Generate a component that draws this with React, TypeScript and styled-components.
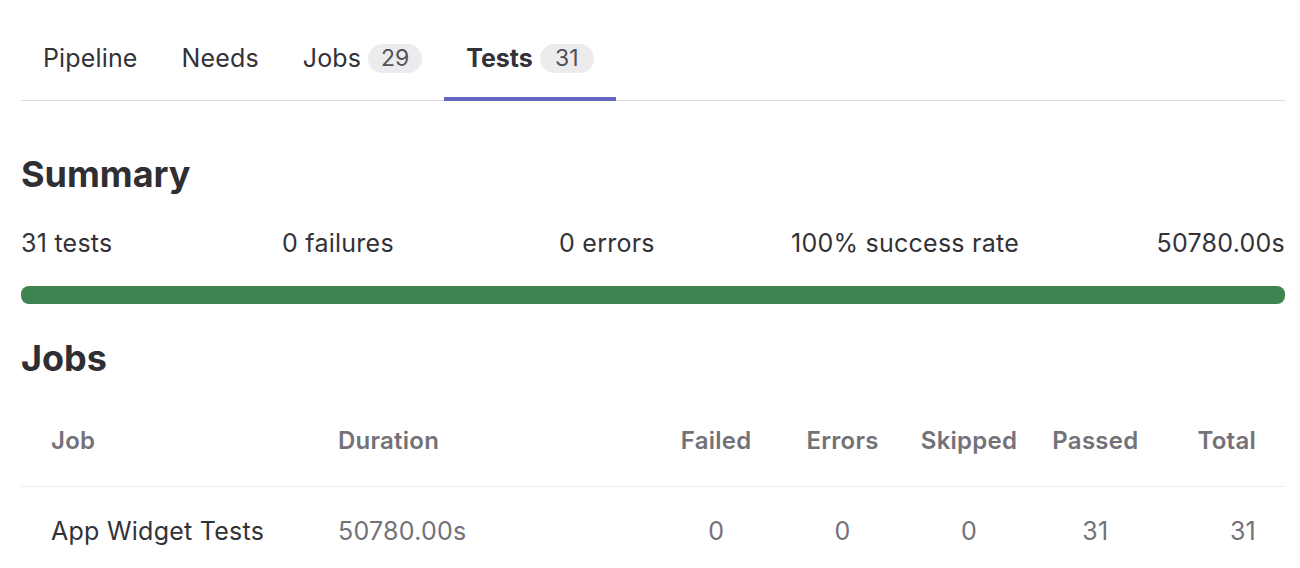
import styled, { createGlobalStyle } from "styled-components";

const GlobalStyle = createGlobalStyle`
  body {
    margin: 0;
    background: #fff;
    font-family: Inter, "Noto Sans", "Liberation Sans", sans-serif;
    color: #333238;
  }
`;

const Page = styled.div`
  padding: 16px 15px 0 21px;
`;

const TabList = styled.div`
  display: flex;
  box-shadow: inset 0 -1px 0 #dcdcde;
`;

const Tab = styled.div<{ $active?: boolean }>`
  display: flex;
  align-items: center;
  gap: 7px;
  padding: 26px 22px 23px;
  font-size: 25px;
  line-height: 32px;
  letter-spacing: ${(p) => (p.$active ? "0" : "0.15px")};
  font-weight: ${(p) => (p.$active ? 700 : 400)};
  color: #333238;
  border-bottom: 4px solid ${(p) => (p.$active ? "#6666c4" : "transparent")};
`;

const Badge = styled.span`
  display: inline-flex;
  align-items: center;
  justify-content: center;
  min-width: 54px;
  height: 29px;
  border-radius: 15px;
  background: #ececef;
  color: #535158;
  font-size: 23px;
  font-weight: 400;
  letter-spacing: 0;
`;

const Heading = styled.h2<{ $top: number }>`
  margin: ${(p) => p.$top}px 0 0;
  font-size: 36px;
  line-height: 40px;
  font-weight: 700;
  color: #2f2e33;
`;

const Stats = styled.div`
  display: grid;
  grid-template-columns: 261px 277px 232px 1fr auto;
  margin-top: 34px;
  font-size: 25px;
  line-height: 30px;
  letter-spacing: 0.25px;
`;

const Bar = styled.div`
  margin-top: 28px;
  height: 18px;
  border-radius: 8px;
  background: #3d8450;
`;

const Table = styled.div`
  margin-top: 14px;
  display: grid;
  grid-template-columns: 287px 345px repeat(5, 1fr);
`;

const Cell = styled.div<{ $head?: boolean; $align?: string; $muted?: boolean }>`
  padding: ${(p) => (p.$head ? "34px 0 30px" : "29px 0")};
  padding-left: ${(p) => (p.$align === "left" ? "30px" : "0")};
  padding-right: ${(p) => (p.$align === "right" ? "29px" : "0")};
  text-align: ${(p) => p.$align || "center"};
  font-size: ${(p) => (p.$head ? "24px" : "25px")};
  line-height: 30px;
  letter-spacing: 0.25px;
  font-weight: ${(p) => (p.$head ? 600 : 400)};
  color: ${(p) => (p.$head || p.$muted ? "#737278" : "#333238")};
  border-bottom: ${(p) => (p.$head ? "1px solid #ececef" : "none")};
`;

const heads: [string, string][] = [
  ["Job", "left"],
  ["Duration", "left"],
  ["Failed", "center"],
  ["Errors", "center"],
  ["Skipped", "center"],
  ["Passed", "center"],
  ["Total", "right"],
];

const row: [string, string, boolean][] = [
  ["App Widget Tests", "left", false],
  ["50780.00s", "left", true],
  ["0", "center", true],
  ["0", "center", true],
  ["0", "center", true],
  ["31", "center", true],
  ["31", "right", true],
];

export default function App() {
  return (
    <>
      <GlobalStyle />
      <Page>
        <TabList>
          <Tab>Pipeline</Tab>
          <Tab>Needs</Tab>
          <Tab>
            <span>Jobs</span>
            <Badge>29</Badge>
          </Tab>
          <Tab $active>
            <span>Tests</span>
            <Badge>31</Badge>
          </Tab>
        </TabList>

        <Heading $top={53}>Summary</Heading>
        <Stats>
          <span>31 tests</span>
          <span>0 failures</span>
          <span>0 errors</span>
          <span>100% success rate</span>
          <span>50780.00s</span>
        </Stats>
        <Bar />

        <Heading $top={34}>Jobs</Heading>
        <Table>
          {heads.map(([label, align]) => (
            <Cell key={label} $head $align={align}>
              {label}
            </Cell>
          ))}
          {row.map(([value, align, muted], i) => (
            <Cell key={i} $align={align} $muted={muted}>
              {value}
            </Cell>
          ))}
        </Table>
      </Page>
    </>
  );
}
